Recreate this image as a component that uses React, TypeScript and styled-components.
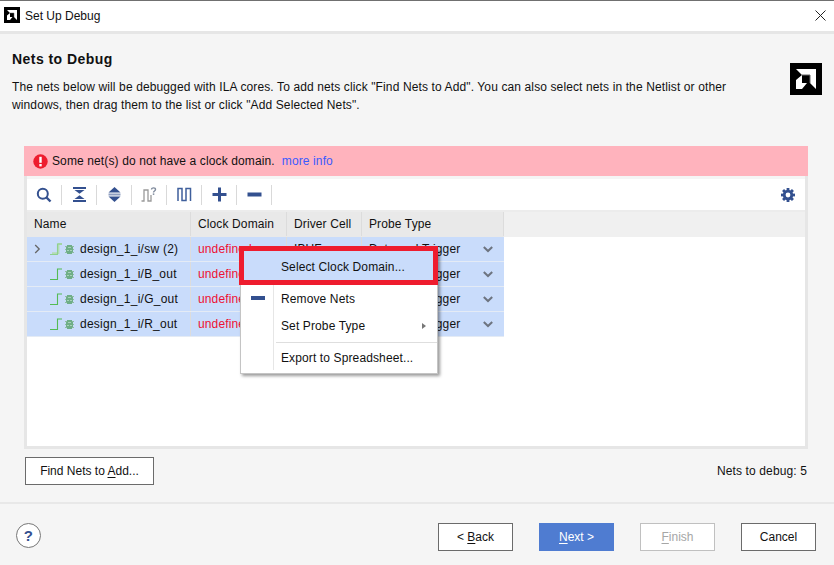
import React from "react";
import styled, { createGlobalStyle } from "styled-components";

const GlobalStyle = createGlobalStyle`
  html, body {
    margin: 0;
    padding: 0;
    background: #f5f5f5;
  }
  body {
    font-family: "Liberation Sans", Arial, sans-serif;
    font-size: 12px;
    letter-spacing: 0.12px;
    color: #111;
    overflow: hidden;
  }
`;

const Page = styled.div`
  width: 834px;
  height: 565px;
  display: flex;
  flex-direction: column;
  box-sizing: border-box;
  border-top: 1px solid #707070;
  background: #f5f5f5;
`;

const TitleBar = styled.div`
  height: 30px;
  flex: none;
  display: flex;
  align-items: center;
  gap: 5px;
  padding: 0 8px 0 4px;
  background: #fff;
  border-bottom: 3px solid #e6e6e6;
`;

const TitleLogo = styled.div`
  display: flex;
  margin-top: -2px;
`;

const TitleText = styled.span`
  font-size: 12px;
  letter-spacing: 0;
  flex: 1;
`;

const CloseIcon = styled.svg`
  margin-top: -2px;
`;

const Content = styled.div`
  flex: 1;
  display: flex;
  flex-direction: column;
  padding: 17px 26px 0 24px;
  min-height: 0;
`;

const Header = styled.div`
  display: flex;
  justify-content: space-between;
  margin: 0 0 0 -12px;
  height: 95px;
  flex: none;
`;

const HeaderText = styled.div`
  width: 740px;
`;

const Heading = styled.h3`
  margin: 0;
  font-size: 14px;
  line-height: 17px;
  font-weight: bold;
  letter-spacing: 0.45px;
`;

const Description = styled.p`
  margin: 10px 0 0;
  line-height: 18px;
  color: #111;
`;

const LogoSlot = styled.div`
  margin: 12px -14px 0 0;
`;

const Alert = styled.div`
  height: 30px;
  flex: none;
  display: flex;
  align-items: center;
  gap: 4px;
  padding-left: 9px;
  background: #ffb3bd;
`;

const AlertLink = styled.span`
  color: #3b5bff;
  margin-left: 3px;
`;

const Panel = styled.div`
  width: 784px;
  flex: none;
  box-sizing: border-box;
  border: 3px solid #e6e6e6;
  border-top: 0;
  display: flex;
  flex-direction: column;
`;

const Toolbar = styled.div`
  height: 31px;
  flex: none;
  display: flex;
  align-items: center;
  margin-top: 3px;
  padding: 0 10px 0 6px;
  background: #fff;
  border-bottom: 2px solid #ececec;
`;

const ToolButton = styled.div`
  width: 22px;
  height: 20px;
  display: flex;
  align-items: center;
  justify-content: center;
`;

const ToolDivider = styled.div`
  width: 1px;
  height: 20px;
  margin: 0 6px;
  background: #d9d9d9;
`;

const Spacer = styled.div`
  flex: 1;
`;

const TableArea = styled.div`
  position: relative;
  height: 234px;
  background: #fff;
`;

const Row = styled.div<{ $selected?: boolean }>`
  display: grid;
  grid-template-columns: 164px 96px 75px 142px;
  width: 477px;
  height: 25px;
  box-sizing: border-box;
  background: ${(p) => (p.$selected ? "#c9dcfb" : "#e9e9e9")};
  border-bottom: 1px solid ${(p) => (p.$selected ? "#e4ebf5" : "#e9e9e9")};
`;

const HeaderStrip = styled.div`
  background: #f0f0f0;
`;

const Cell = styled.div<{ $red?: boolean }>`
  display: flex;
  align-items: center;
  box-sizing: border-box;
  padding-left: 7px;
  white-space: nowrap;
  overflow: hidden;
  border-right: 1px solid #dcdcdc;
  color: ${(p) => (p.$red ? "#ee1133" : "#111")};
`;

const NetName = styled.span`
  letter-spacing: 0.25px;
`;

const ProbeCell = styled(Cell)`
  justify-content: space-between;
  padding-right: 11px;
  border-right: 0;
`;

const Expander = styled.div`
  width: 13px;
  height: 12px;
  flex: none;
  display: flex;
  align-items: center;
`;

const NetIcons = styled.div`
  width: 30px;
  flex: none;
  display: flex;
  align-items: center;
  gap: 3px;
  margin-left: 3px;
`;

const Menu = styled.div`
  position: absolute;
  left: 213px;
  top: 36px;
  width: 198px;
  height: 126px;
  box-sizing: border-box;
  background: #fff;
  border: 1px solid #c4c4c4;
  box-shadow: 2px 2px 3px rgba(0, 0, 0, 0.4);
  padding-top: 2px;
`;

const MenuGutter = styled.div`
  position: absolute;
  left: 32px;
  top: 0;
  bottom: 3px;
  width: 1px;
  background: #e6e6e6;
`;

const MenuItem = styled.div<{ $active?: boolean; $height?: number }>`
  position: relative;
  box-sizing: border-box;
  height: ${(p) => p.$height ?? 27}px;
  display: flex;
  align-items: center;
  padding: ${(p) => (p.$active ? "2px" : "0")} 10px 0 40px;
  background: ${(p) => (p.$active ? "#c9dcfb" : "transparent")};
`;

const MenuIconSlot = styled.div`
  position: absolute;
  left: 10px;
  top: 11px;
  width: 14px;
  height: 4px;
  background: #33508f;
`;

const MenuLabel = styled.span`
  flex: 1;
`;

const MenuSeparator = styled.div`
  height: 1px;
  margin: 3px 0 1px 35px;
  background: #dedede;
`;

const RedBox = styled.div`
  position: absolute;
  left: -2px;
  top: -5px;
  width: 199px;
  height: 39px;
  box-sizing: border-box;
  border: 5px solid #ee1c2e;
`;

const Footer = styled.div`
  height: 36px;
  flex: none;
  box-sizing: border-box;
  display: flex;
  align-items: center;
  justify-content: space-between;
  padding: 8px 1px 0 1px;
`;

const Button = styled.button<{ $variant?: "primary" | "disabled" }>`
  width: 75px;
  height: 28px;
  box-sizing: border-box;
  padding: 0;
  font: inherit;
  letter-spacing: 0;
  color: ${(p) =>
    p.$variant === "primary" ? "#fff" : p.$variant === "disabled" ? "#a6a6a6" : "#111"};
  background: ${(p) => (p.$variant === "primary" ? "#4f7cd1" : "#fff")};
  border: 1px solid
    ${(p) =>
      p.$variant === "primary" ? "#4f7cd1" : p.$variant === "disabled" ? "#c0c0c0" : "#6b6b6b"};
  border-radius: 0;
  u {
    text-underline-offset: 2px;
  }
`;

const WideButton = styled(Button)`
  width: 129px;
`;

const BottomBar = styled.div`
  margin-top: auto;
  height: 63px;
  flex: none;
  box-sizing: border-box;
  display: flex;
  align-items: flex-start;
  justify-content: space-between;
  padding: 19px 18px 0 16px;
  border-top: 2px solid #e8e8e8;
`;

const ButtonGroup = styled.div`
  display: flex;
  gap: 26px;
`;

const HelpButton = styled.div`
  width: 25px;
  height: 25px;
  box-sizing: border-box;
  display: flex;
  align-items: center;
  justify-content: center;
  border: 1px solid #777;
  border-radius: 50%;
  background: #fff;
  color: #33508f;
  font-size: 15px;
  font-weight: bold;
`;

const navy = "#33508f";

const AmdLogo = ({ size }: { size: number }) => (
  <svg width={size} height={size} viewBox="0 0 32 32">
    <rect width="32" height="32" fill="#000" />
    <path d="M6 6h20v20l-6-6V12h-8z" fill="#fff" />
    <path d="M6 17l6-5v8h5l-5 6H6z" fill="#fff" />
    <path d="M12 12h8v8" fill="none" stroke="#666" strokeWidth="1" />
  </svg>
);

const SearchIcon = () => (
  <svg width="16" height="16" viewBox="0 0 16 16" fill="none" stroke={navy}>
    <circle cx="6.8" cy="6.8" r="5" strokeWidth="2" />
    <path d="M10.5 10.5l4 4" strokeWidth="2.4" />
  </svg>
);

const CollapseIcon = () => (
  <svg width="13" height="15" viewBox="0 0 13 15" fill={navy}>
    <rect x="0" y="0" width="13" height="2" />
    <path d="M1.5 3h10L6.5 6.8z" />
    <path d="M1.5 12h10L6.5 8.2z" />
    <rect x="0" y="13" width="13" height="2" />
  </svg>
);

const ExpandIcon = () => (
  <svg width="13" height="15" viewBox="0 0 13 15" fill={navy}>
    <path d="M6.5 0L12.5 5.5H0.5z" />
    <rect x="0.5" y="6.5" width="12" height="2" fill="#8d9dc0" />
    <path d="M6.5 15L12.5 9.5H0.5z" />
  </svg>
);

const PulseQueryIcon = () => (
  <svg width="16" height="15" viewBox="0 0 16 15" fill="none">
    <path d="M0.5 14h2.5V3h4v11h3V8" stroke="#9a9a9a" strokeWidth="1.3" />
    <path d="M10.5 2.4c0-2 4-2 4 0 0 1.6-2 1.6-2 3.2" stroke="#7f8a9c" strokeWidth="1.4" />
    <rect x="11.8" y="6.4" width="1.5" height="1.5" fill="#7f8a9c" />
  </svg>
);

const PulseIcon = () => (
  <svg width="15" height="15" viewBox="0 0 15 15" fill="none" stroke="#3f5f9c" strokeWidth="1.5">
    <path d="M1 14V1.5h4V13.5h4V1.5h4.5V14" />
  </svg>
);

const PlusIcon = () => (
  <svg width="15" height="15" viewBox="0 0 15 15" fill={navy}>
    <rect x="0.5" y="6" width="14" height="3" />
    <rect x="6" y="0.5" width="3" height="14" />
  </svg>
);

const MinusIcon = () => (
  <svg width="15" height="15" viewBox="0 0 15 15" fill={navy}>
    <rect x="0.5" y="5.5" width="14" height="4" />
  </svg>
);

const GearIcon = () => (
  <svg width="14" height="14" viewBox="0 0 14 14">
    <g fill={navy}>
      <circle cx="7" cy="7" r="5.2" />
      {[0, 45, 90, 135].map((a) => (
        <rect key={a} x="5.6" y="0" width="2.8" height="14" transform={`rotate(${a} 7 7)`} />
      ))}
    </g>
    <circle cx="7" cy="7" r="2.4" fill="#fff" />
  </svg>
);

const AlertIcon = () => (
  <svg width="15" height="15" viewBox="0 0 15 15">
    <circle cx="7.5" cy="7.5" r="7.2" fill="#ee1c2e" />
    <rect x="6.3" y="2.8" width="2.4" height="6" fill="#fff" />
    <rect x="6.3" y="10" width="2.4" height="2.4" fill="#fff" />
  </svg>
);

const StepIcon = ({ bus }: { bus?: boolean }) => (
  <svg width="12" height="12" viewBox="0 0 12 12" fill="none">
    {bus && <path d="M2 10.2h6.5V1H12" stroke="#b4dcb4" strokeWidth="1.8" />}
    <path d="M0 11.5h7.5V1H12" stroke={bus ? "#8fd08f" : "#55bb55"} strokeWidth="1.1" />
  </svg>
);

const BugIcon = () => (
  <svg width="9" height="9" viewBox="0 0 9 9" shapeRendering="crispEdges">
    <g fill="#8dbd9f">
      <rect x="0" y="1" width="9" height="1" />
      <rect x="0" y="4" width="9" height="1" />
      <rect x="0" y="7" width="9" height="1" />
    </g>
    <rect x="2" y="0" width="5" height="9" fill="#6fae88" />
    <rect x="1" y="2" width="7" height="5" fill="#6fae88" />
    <rect x="3" y="2" width="3" height="1" fill="#a9d2b8" />
    <rect x="2" y="5" width="2" height="1" fill="#a9d2b8" />
    <rect x="5" y="5" width="2" height="1" fill="#a9d2b8" />
  </svg>
);

const ChevronRight = () => (
  <svg width="7" height="10" viewBox="0 0 7 10" fill="none" stroke="#666" strokeWidth="1.3">
    <path d="M1.2 1l4 4-4 4" />
  </svg>
);

const ChevronDown = () => (
  <svg width="10" height="7" viewBox="0 0 10 7" fill="none" stroke="#6d7480" strokeWidth="2">
    <path d="M0.8 1l4.2 4 4.2-4" />
  </svg>
);

const SubmenuArrow = styled.span`
  width: 0;
  height: 0;
  border-left: 4px solid #777;
  border-top: 3.5px solid transparent;
  border-bottom: 3.5px solid transparent;
  margin-right: 1px;
`;

const nets = [
  { name: "design_1_i/sw (2)", driver: "IBUF", bus: true },
  { name: "design_1_i/B_out", driver: "OBUF" },
  { name: "design_1_i/G_out", driver: "OBUF" },
  { name: "design_1_i/R_out", driver: "OBUF" },
];

export default function App() {
  return (
    <Page>
      <GlobalStyle />
      <TitleBar>
        <TitleLogo>
          <AmdLogo size={16} />
        </TitleLogo>
        <TitleText>Set Up Debug</TitleText>
        <CloseIcon width="11" height="11" viewBox="0 0 11 11" fill="none" stroke="#222">
          <path d="M0.5 0.5l10 10M10.5 0.5l-10 10" />
        </CloseIcon>
      </TitleBar>
      <Content>
        <Header>
          <HeaderText>
            <Heading>Nets to Debug</Heading>
            <Description>
              The nets below will be debugged with ILA cores. To add nets click "Find Nets to Add". You can also
              select nets in the Netlist or other windows, then drag them to the list or click "Add Selected Nets".
            </Description>
          </HeaderText>
          <LogoSlot>
            <AmdLogo size={32} />
          </LogoSlot>
        </Header>
        <Alert>
          <AlertIcon />
          <span>Some net(s) do not have a clock domain.</span>
          <AlertLink>more info</AlertLink>
        </Alert>
        <Panel>
          <Toolbar>
            <ToolButton><SearchIcon /></ToolButton>
            <ToolDivider />
            <ToolButton><CollapseIcon /></ToolButton>
            <ToolDivider />
            <ToolButton><ExpandIcon /></ToolButton>
            <ToolDivider />
            <ToolButton><PulseQueryIcon /></ToolButton>
            <ToolDivider />
            <ToolButton><PulseIcon /></ToolButton>
            <ToolDivider />
            <ToolButton><PlusIcon /></ToolButton>
            <ToolDivider />
            <ToolButton><MinusIcon /></ToolButton>
            <ToolDivider />
            <Spacer />
            <GearIcon />
          </Toolbar>
          <TableArea>
            <HeaderStrip>
              <Row>
                <Cell>Name</Cell>
                <Cell>Clock Domain</Cell>
                <Cell>Driver Cell</Cell>
                <Cell>Probe Type</Cell>
              </Row>
            </HeaderStrip>
            {nets.map((net) => (
              <Row $selected key={net.name}>
                <Cell>
                  <Expander>{net.bus && <ChevronRight />}</Expander>
                  <NetIcons>
                    <StepIcon bus={net.bus} />
                    <BugIcon />
                  </NetIcons>
                  <NetName>{net.name}</NetName>
                </Cell>
                <Cell $red>undefined</Cell>
                <Cell>{net.driver}</Cell>
                <ProbeCell>
                  Data and Trigger
                  <ChevronDown />
                </ProbeCell>
              </Row>
            ))}
            <Menu>
              <MenuGutter />
              <MenuItem $active $height={30}>
                <MenuLabel>Select Clock Domain...</MenuLabel>
                <RedBox />
              </MenuItem>
              <MenuItem $height={4} />
              <MenuItem>
                <MenuIconSlot />
                <MenuLabel>Remove Nets</MenuLabel>
              </MenuItem>
              <MenuItem>
                <MenuLabel>Set Probe Type</MenuLabel>
                <SubmenuArrow />
              </MenuItem>
              <MenuSeparator />
              <MenuItem>
                <MenuLabel>Export to Spreadsheet...</MenuLabel>
              </MenuItem>
            </Menu>
          </TableArea>
        </Panel>
        <Footer>
          <WideButton>
            Find Nets to <u>A</u>dd...
          </WideButton>
          <span>Nets to debug: 5</span>
        </Footer>
      </Content>
      <BottomBar>
        <HelpButton>?</HelpButton>
        <ButtonGroup>
          <Button>
            &lt; <u>B</u>ack
          </Button>
          <Button $variant="primary">
            <u>N</u>ext &gt;
          </Button>
          <Button $variant="disabled">
            <u>F</u>inish
          </Button>
          <Button>Cancel</Button>
        </ButtonGroup>
      </BottomBar>
    </Page>
  );
}
